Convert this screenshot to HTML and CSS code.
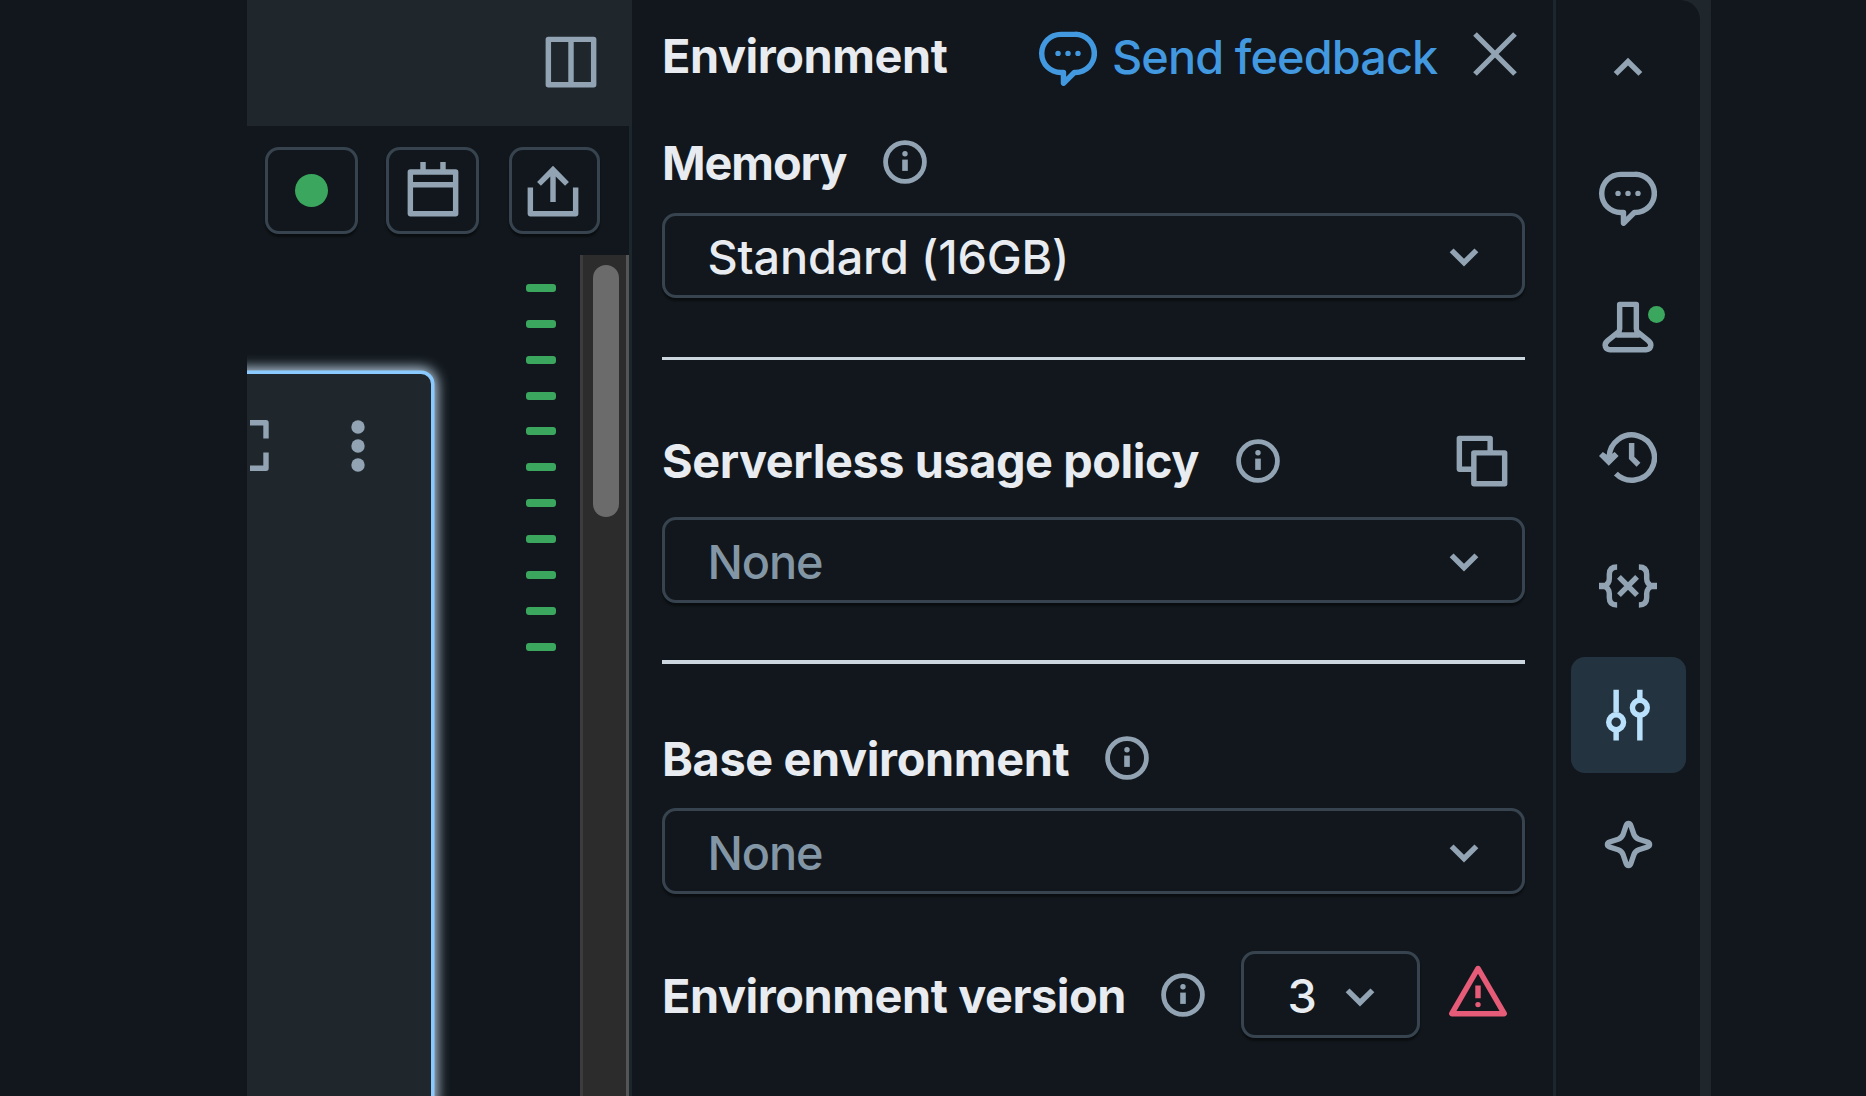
FILE: index.html
```html
<!DOCTYPE html>
<html lang="en">
<head>
<meta charset="utf-8">
<title>Environment</title>
<link rel="stylesheet" href="styles.css">
</head>
<body>
<svg class="sprite" aria-hidden="true">
  <symbol id="comment" viewBox="0 0 16 16"><path d="M6 7a.75.75 0 1 1-1.5 0A.75.75 0 0 1 6 7M8 7.75a.75.75 0 1 0 0-1.5.75.75 0 0 0 0 1.5M10.75 7.75a.75.75 0 1 0 0-1.5.75.75 0 0 0 0 1.5"/><path fill-rule="evenodd" d="M6 1a6 6 0 1 0 0 12v2.25a.75.75 0 0 0 1.28.53L10.061 13A6 6 0 0 0 10 1zM1.5 7A4.5 4.5 0 0 1 6 2.5h4a4.5 4.5 0 1 1 0 9h-.25a.75.75 0 0 0-.53.22L7.5 13.44v-1.19a.75.75 0 0 0-.75-.75H6A4.5 4.5 0 0 1 1.5 7"/></symbol>
  <symbol id="info" viewBox="0 0 44 44"><circle cx="22" cy="22" r="19.4" fill="none" stroke="currentColor" stroke-width="4.8"/><circle cx="22" cy="13.8" r="2.7"/><path d="M19.2 19.6h5.6v11.3h-5.6z"/></symbol>
  <symbol id="chevron" viewBox="0 0 16 16"><path d="M8 10.9 4.05 6.97l1.06-1.06L8 8.78l2.89-2.87 1.06 1.06z"/></symbol>
</svg>
<div class="app">
  <section class="editor">
    <header class="editor-header">
      <svg class="icon" viewBox="0 0 16 16"><path fill-rule="evenodd" d="M1 1.75A.75.75 0 0 1 1.75 1h12.5a.75.75 0 0 1 .75.75v12.5a.75.75 0 0 1-.75.75H1.75a.75.75 0 0 1-.75-.75zM2.5 2.5v11h4.75v-11zm6.25 0v11h4.75v-11z"/></svg>
    </header>
    <div class="workspace">
      <div class="toolbar">
        <button class="tool"><span class="status"></span></button>
        <button class="tool"><svg class="icon" viewBox="0 0 16 16"><path fill-rule="evenodd" d="M4.5 0v2H1.75a.75.75 0 0 0-.75.75v11.5c0 .414.336.75.75.75h12.5a.75.75 0 0 0 .75-.75V2.75a.75.75 0 0 0-.75-.75H11.5V0H10v2H6V0zm9 5.5v-2h-11v2zm-11 1.5v6.5h11V7z"/></svg></button>
        <button class="tool tool-share"><svg class="icon" viewBox="0 0 16 16"><path d="M1 7v7.25c0 .414.336.75.75.75h12.5a.75.75 0 0 0 .75-.75V7h-1.5v6.5h-11V7z"/><path d="M7.25 3.97v7.03h1.5V3.97l2.58 2.58 1.06-1.06L8 1.06 3.61 5.49l1.06 1.06z"/></svg></button>
      </div>
      <div class="notebook">
        <div class="cell-area">
          <article class="cell">
            <svg class="cell-expand" viewBox="0 0 19 51"><path fill="none" stroke="currentColor" stroke-width="5.4" stroke-linejoin="round" d="M0 2.7h16V18.5M0 48.3h16V32.5"/></svg>
            <svg class="cell-menu" viewBox="0 0 14 52"><circle cx="7" cy="7" r="6.7"/><circle cx="7" cy="26" r="6.7"/><circle cx="7" cy="45" r="6.7"/></svg>
          </article>
        </div>
        <div class="minimap"><i></i><i></i><i></i><i></i><i></i><i></i><i></i><i></i><i></i><i></i><i></i></div>
        <div class="scrollbar"><div class="thumb"></div></div>
      </div>
    </div>
  </section>
  <section class="panel">
    <header class="panel-header">
      <h2 class="label title">Environment</h2>
      <a class="feedback"><svg class="icon"><use href="#comment"/></svg><span class="feedback-text">Send feedback</span></a>
      <svg class="close" viewBox="0 0 44 44"><path fill="none" stroke="currentColor" stroke-width="5.2" d="m2 2 40 40M42 2 2 42"/></svg>
    </header>
    <div class="row memory-row"><h3 class="label memory">Memory</h3><svg class="info"><use href="#info"/></svg></div>
    <div class="select memory-select"><span class="value">Standard (16GB)</span><svg class="icon"><use href="#chevron"/></svg></div>
    <hr class="divider">
    <div class="row policy-row"><h3 class="label policy">Serverless usage policy</h3><svg class="info"><use href="#info"/></svg>
      <svg class="icon copy" viewBox="0 0 16 16"><path fill-rule="evenodd" d="M1.75 1a.75.75 0 0 0-.75.75v8.5c0 .414.336.75.75.75H5v3.25c0 .414.336.75.75.75h8.5a.75.75 0 0 0 .75-.75v-8.5a.75.75 0 0 0-.75-.75H11V1.75a.75.75 0 0 0-.75-.75zM9.5 5V2.5h-7v7H5V5.75A.75.75 0 0 1 5.75 5zm-3 8.5v-7h7v7z"/></svg></div>
    <div class="select policy-select"><span class="value none">None</span><svg class="icon"><use href="#chevron"/></svg></div>
    <hr class="divider">
    <div class="row base-row"><h3 class="label base">Base environment</h3><svg class="info"><use href="#info"/></svg></div>
    <div class="select base-select"><span class="value none">None</span><svg class="icon"><use href="#chevron"/></svg></div>
    <div class="row version-row"><h3 class="label version">Environment version</h3><svg class="info"><use href="#info"/></svg>
      <div class="select version-select"><span class="value">3</span><svg class="icon"><use href="#chevron"/></svg></div>
      <svg class="icon warning" viewBox="0 0 16 16"><path d="M7.25 10V6.5h1.5V10zM8 12.5a.75.75 0 1 0 0-1.5.75.75 0 0 0 0 1.5"/><path fill-rule="evenodd" d="M8 1a.75.75 0 0 1 .649.374l7.25 12.5A.75.75 0 0 1 15.25 15H.75a.75.75 0 0 1-.649-1.126l7.25-12.5A.75.75 0 0 1 8 1m0 2.245L2.052 13.5h11.896z"/></svg>
    </div>
  </section>
  <nav class="rail-wrap">
    <div class="rail">
      <button class="rail-item"><svg class="icon" viewBox="0 0 16 16"><path d="m8 4.9 3.95 3.93-1.06 1.06L8 7.02l-2.89 2.87-1.06-1.06z"/></svg></button>
      <button class="rail-item"><svg class="icon raised"><use href="#comment"/></svg></button>
      <button class="rail-item"><svg class="icon" viewBox="0 0 16 16"><path fill="none" stroke="currentColor" stroke-width="1.5" stroke-linejoin="round" d="M5.7 1.75h4.6v6.8q0 .5.4.85l2.9 2.35c1.3 1.15.6 2.5-.6 2.5H3c-1.2 0-1.9-1.35-.6-2.5L5.3 9.4q.4-.35.4-.85zM4.8 10.2h6.4"/></svg><span class="badge"></span></button>
      <button class="rail-item"><svg class="icon" viewBox="0 0 16 16"><path fill="none" stroke="currentColor" stroke-width="1.5" d="M2.8 8.5V8A6.25 6.25 0 1 1 4.65 12.6"/><path d="M0 7.7 1.06 6.64l1.64 1.1 1.64-1.1L5.4 7.7 2.7 10.4z"/><path fill="none" stroke="currentColor" stroke-width="1.5" d="M9 4.15v4.1l1.9 1.9"/></svg></button>
      <button class="rail-item"><svg class="icon" viewBox="0 0 16 16"><path fill="none" stroke="currentColor" stroke-width="1.5" d="M5 2.75c-1.45 0-2.15.75-2.15 2V5.9c0 1.1-.5 1.7-1.5 2.1 1 .4 1.5 1 1.500 2.1v1.150c0 1.250.7 2 2.150 2M11 2.750c1.450 0 2.150.75 2.150 2V5.900c0 1.100.5 1.700 1.500 2.100-1 .4-1.500 1-1.500 2.100v1.150c0 1.250-.7 2-2.150 2M5.500 5.500l5 5M10.500 5.500l-5 5"/><path d="M0 7.100h1.400v1.800H0zM16 7.100h-1.400v1.800H16z"/></svg></button>
      <button class="rail-item active"><svg class="icon" viewBox="0 0 16 16"><g fill="none" stroke="currentColor" stroke-width="1.5"><path d="M4.73 1v6.300M4.730 12v3M11.270 1v2.500M11.270 8.200V15"/><circle cx="4.730" cy="10" r="2.050"/><circle cx="11.270" cy="6" r="2.050"/></g></svg></button>
      <button class="rail-item"><svg class="icon sparkle" viewBox="0 0 16 16"><path fill="none" stroke="currentColor" stroke-width="1.550" stroke-linejoin="round" d="M7.300 2.500c.3-.85 1.100-.85 1.400 0l.85 2.500q.4 1.050 1.450 1.450l2.500.85c.85.3.85 1.100 0 1.400l-2.500.85Q9.950 9.950 9.550 11l-.85 2.500c-.3.85-1.100.85-1.400 0L6.450 11Q6.050 9.950 5 9.550L2.500 8.700c-.85-.3-.85-1.100 0-1.400L5 6.450Q6.050 6.050 6.450 5z"/></svg></button>
    </div>
  </nav>
</div>
</body>
</html>
```
FILE: styles.css
```css
* { box-sizing: border-box; }
body {
  margin: 0;
  height: 1096px;
  overflow: hidden;
  background: #11171c;
  font-family: Inter, "Liberation Sans", sans-serif;
  font-size: 46.8px;
  font-weight: 450;
  line-height: 56px;
  color: #e8ecf0;
}
.sprite { position: absolute; width: 0; height: 0; }
svg { display: block; flex: none; fill: currentColor; color: #92a4b3; }
button { margin: 0; padding: 0; background: none; border: 0; }
h2, h3 { margin: 0; }
.icon { width: 58px; height: 58px; }

.app { display: flex; height: 1096px; padding-left: 247px; }

/* Editor column */
.editor { width: 385px; flex: none; display: flex; flex-direction: column; overflow: hidden; }
.editor-header { height: 126px; flex: none; display: flex; justify-content: flex-end; padding: 32.8px 31.8px 0 0; background: #1f272d; }
.workspace { flex: 1; display: flex; flex-direction: column; border-right: 3px solid #1b262d; }
.toolbar { display: flex; gap: 28px; height: 129.3px; padding: 21.4px 0 0 18px; }
.tool {
  width: 93px; height: 87px;
  display: grid; place-items: center;
  border: 3px solid #37444f; border-radius: 14px;
  box-shadow: 0 3px 2px rgba(0, 0, 0, .4);
}
.tool-share { width: 91.5px; margin-left: 1.5px; }
.tool-share .icon { margin-left: -2px; }
.status { width: 33px; height: 33px; border-radius: 50%; background: #3ba65e; }
.notebook { flex: 1; display: flex; }
.cell-area { width: 279.3px; flex: none; padding-top: 116px; overflow: hidden; }
.cell {
  height: 740px; width: 206.5px; margin-left: -20px;
  display: flex; align-items: flex-start; justify-content: flex-end;
  padding: 46px 66px 0 0;
  background: #1f272d;
  border: 3px solid #8acaff; border-radius: 13px;
  box-shadow: 0 0 0 .5px #8acaff, 0 0 13px 3px #bdd3e6;
}
.cell-expand { width: 19px; height: 51px; margin-right: 81.5px; }
.cell-menu { width: 14px; height: 52px; }
.minimap { width: 53.7px; flex: none; padding-top: 28.7px; display: flex; flex-direction: column; gap: 27.86px; }
.minimap i { width: 29.5px; height: 8px; border-radius: 3px; background: #3ba65e; }
.scrollbar { flex: 1; padding: 9.7px 0 0 10px; background: #2c2c2c; border-left: 3px solid #3c3c3c; border-right: 3px solid #555; }
.thumb { width: 26.5px; height: 252px; border-radius: 14px; background: #6b6b6b; }

/* Environment panel */
.panel { width: 920.5px; flex: none; padding: 0 28px 0 30px; }
.panel-header { height: 110px; display: flex; align-items: center; }
.label { font-size: 46.8px; font-weight: 700; letter-spacing: -.42px; white-space: nowrap; }
.title { width: 377px; padding-top: 1px; }
.feedback { display: flex; align-items: center; margin-top: 4px; color: #4299e0; }
.feedback svg { color: #4299e0; }
.feedback-text { margin-left: 15px; width: 361px; white-space: nowrap; letter-spacing: -.88px; }
.close { width: 44px; height: 44px; margin-top: -2px; }
.row { display: flex; align-items: center; height: 52px; }
.info { width: 44px; height: 44px; margin-top: -2px; }
.memory-row { margin-top: 27px; }
.memory { width: 221px; letter-spacing: -1.1px; }
.select {
  display: flex; align-items: center; justify-content: space-between;
  height: 86.5px; padding: 3px 28.5px 0 42.5px;
  border: 3px solid #37444f; border-radius: 14px;
  box-shadow: 0 3px 2px rgba(0, 0, 0, .4);
}
.value { white-space: nowrap; letter-spacing: -.18px; }
.none { padding-top: 2px; letter-spacing: -1.1px; color: #8396a5; }
.memory-select { height: 85px; margin-top: 24px; padding-top: 2px; }
.memory-select .icon { margin-top: -2px; }
.divider { height: 3.5px; margin: 58.5px 0 0; border: 0; background: #ccd6de; }
.policy-row { margin-top: 74.5px; }
.policy { width: 573.5px; }
.policy-row .info { margin-top: 0; }
.copy { margin-left: 173px; }
.policy-select { margin-top: 30px; }
.policy-select + .divider { margin-top: 57px; }
.base-row { margin-top: 69.5px; }
.base { width: 443px; letter-spacing: -.35px; }
.base-select { margin-top: 22.5px; }
.version-row { height: 87px; margin-top: 57px; }
.version { width: 498.5px; padding-top: 3px; }
.version-row .info { margin-top: 0; }
.version-select { width: 179.5px; margin-left: 36px; padding: 3px 28.5px 0 44px; }
.warning { margin: -7px 0 0 29px; color: #e65b77; }

/* Side rail */
.rail-wrap { width: 158.5px; flex: none; background: #1f272d; }
.rail {
  width: 147px; height: 1096px; padding: 10.7px 0 0 1px;
  display: flex; flex-direction: column; align-items: center; gap: 13.3px;
  background: #11171c; border-left: 3px solid #1b262d; border-top-right-radius: 20px;
}
.rail-item { position: relative; width: 115px; height: 116px; flex: none; display: grid; place-items: center; border-radius: 14px; }
.active { background: #243340; }
.active svg { color: #bae1fc; }
.raised { margin-top: -1.5px; }
.sparkle { width: 55px; height: 55px; }
.badge { position: absolute; left: 77.5px; top: 36.5px; width: 17px; height: 17px; border-radius: 50%; background: #3ba65e; }
```
